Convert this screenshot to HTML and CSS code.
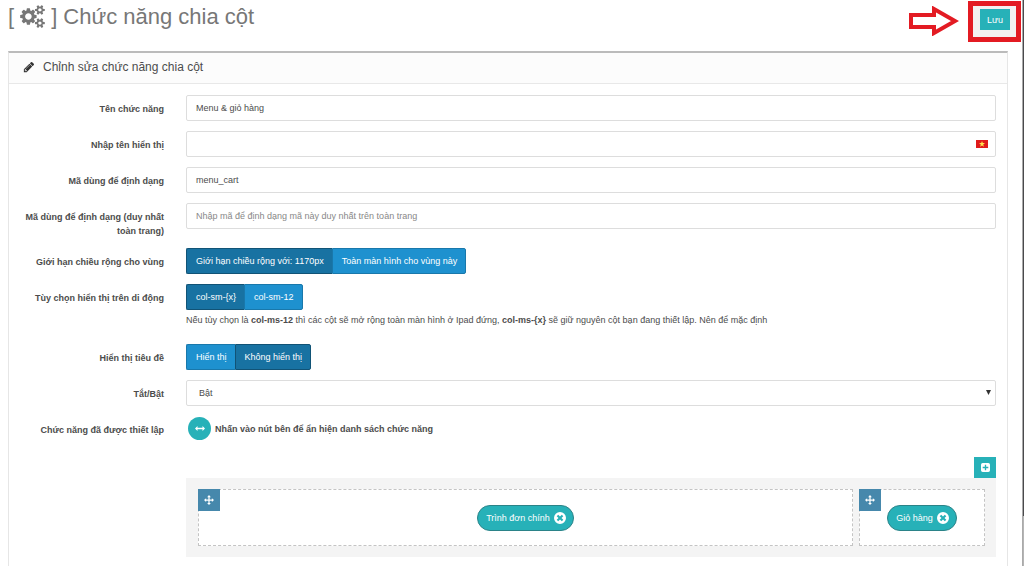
FILE: index.html
```html
<!DOCTYPE html>
<html lang="vi">
<head>
<meta charset="utf-8">
<meta name="viewport" content="width=device-width, initial-scale=1">
<title>Chức năng chia cột</title>
<link rel="stylesheet" href="styles.css">
</head>
<body>
<svg class="defs" aria-hidden="true">
  <symbol id="i-move" viewBox="0 0 16 16"><path d="M8 0l3 3.4H9v3.6h3.6V5L16 8l-3.4 3V9H9v3.6h2L8 16l-3-3.400h2V9H3.400v2L0 8l3.400-3v2H7V3.400H5z"/></symbol>
  <symbol id="i-close" viewBox="0 0 16 16"><path fill-rule="evenodd" d="M8 0a8 8 0 1 0 0 16A8 8 0 0 0 8 0zM5.600 3.600L8 6l2.400-2.400 2 2L10 8l2.400 2.400-2 2L8 10l-2.400 2.400-2-2L6 8 3.600 5.600z"/></symbol>
</svg>
<div class="page">
  <main class="content">
    <header class="top">
      <h1 class="title">[
        <svg class="cogs" viewBox="0 0 1920 1792" aria-hidden="true"><path d="M896 896q0-106-75-181t-181-75-181 75-75 181 75 181 181 75 181-75 75-181zm768 512q0-52-38-90t-90-38-90 38-38 90q0 53 37.500 90.500t90.500 37.500 90.500-37.500 37.500-90.500zm0-1024q0-52-38-90t-90-38-90 38-38 90q0 53 37.500 90.500t90.500 37.500 90.500-37.500 37.500-90.500zm-384 421v185q0 10-7 19.500t-16 10.500l-155 24q-11 35-32 76 34 48 90 115 7 11 7 20 0 12-7 19-23 30-82.500 89.500t-78.500 59.500q-11 0-21-7l-115-90q-37 19-77 31-11 108-23 155-7 24-30 24h-186q-11 0-20-7.500t-10-17.500l-23-153q-34-10-75-31l-118 89q-7 7-20 7-11 0-21-8-144-133-144-160 0-9 7-19 10-14 41-53t47-61q-23-44-35-82l-152-24q-10-1-17-9.500t-7-19.500v-185q0-10 7-19.500t16-10.500l155-24q11-35 32-76-34-48-90-115-7-11-7-20 0-12 7-20 22-30 82-89t79-59q11 0 21 7l115 90q34-18 77-32 11-108 23-154 7-24 30-24h186q11 0 20 7.500t10 17.500l23 153q34 10 75 31l118-89q8-7 20-7 11 0 21 8 144 133 144 160 0 8-7 19-12 16-42 54t-45 60q23 48 34 82l152 23q10 2 17 10.500t7 19.500zm640 533v140q0 16-149 31-12 27-30 52 51 113 51 138 0 4-4 7-122 71-124 71-8 0-46-47t-52-68q-20 2-30 2t-30-2q-14 21-52 68t-46 47q-2 0-124-71-4-3-4-7 0-25 51-138-18-25-30-52-149-15-149-31v-140q0-16 149-31 13-29 30-52-51-113-51-138 0-4 4-7 4-2 35-20t59-34 30-16q8 0 46 46.500t52 67.500q20-2 30-2t30 2q51-71 92-112l6-2q4 0 124 70 4 3 4 7 0 25-51 138 17 23 30 52 149 15 149 31zm0-1024v140q0 16-149 31-12 27-30 52 51 113 51 138 0 4-4 7-122 71-124 71-8 0-46-47t-52-68q-20 2-30 2t-30-2q-14 21-52 68t-46 47q-2 0-124-71-4-3-4-7 0-25 51-138-18-25-30-52-149-15-149-31v-140q0-16 149-31 13-29 30-52-51-113-51-138 0-4 4-7 4-2 35-20t59-34 30-16q8 0 46 46.500t52 67.500q20-2 30-2t30 2q51-71 92-112l6-2q4 0 124 70 4 3 4 7 0 25-51 138 17 23 30 52 149 15 149 31z"/></svg>
        ] Chức năng chia cột</h1>
      <div class="callout">
        <svg class="callout-arrow" viewBox="0 0 50 30" aria-hidden="true"><path d="M2 9h23V3l21 12-21 12v-6H2z"/></svg>
        <div class="callout-box"><button class="save" type="submit" form="settings">Lưu</button></div>
      </div>
    </header>
    <section class="panel">
      <h2 class="panel-head">
        <svg class="pencil" viewBox="0 0 1792 1792" aria-hidden="true"><path d="M491 1536l91-91-235-235-91 91v107h128v128h107zm523-928q0-22-22-22-10 0-17 7l-542 542q-7 7-7 17 0 22 22 22 10 0 17-7l542-542q7-7 7-17zm-54-192l416 416-832 832h-416v-416zm683 96q0 53-37 90l-166 166-416-416 166-165q36-38 90-38 53 0 91 38l235 234q37 39 37 91z"/></svg>
        Chỉnh sửa chức năng chia cột
      </h2>
      <form class="form" id="settings">
        <div class="row">
          <label class="label" for="name">Tên chức năng</label>
          <input class="control" id="name" type="text" value="Menu &amp; giỏ hàng">
        </div>
        <div class="row">
          <label class="label" for="display">Nhập tên hiển thị</label>
          <div class="field">
            <input class="control" id="display" type="text">
            <svg class="flag" viewBox="0 0 12 8" aria-hidden="true"><path fill="#e01b1b" d="M0 0h12v8H0z"/><path fill="#ffe34d" d="M6 1l.8 2.100H9L7.200 4.500l.7 2.200L6 5.400 4.100 6.700l.7-2.200L3 3.100h2.200z"/></svg>
          </div>
        </div>
        <div class="row">
          <label class="label" for="code">Mã dùng để định dạng</label>
          <input class="control" id="code" type="text" value="menu_cart">
        </div>
        <div class="row">
          <label class="label" for="unique">Mã dùng để định dạng (duy nhất toàn trang)</label>
          <input class="control" id="unique" type="text" placeholder="Nhập mã để định dạng mã này duy nhất trên toàn trang">
        </div>
        <div class="row" role="radiogroup" aria-labelledby="l-width">
          <span class="label" id="l-width">Giới hạn chiều rộng cho vùng</span>
          <div class="segments">
            <label class="segment"><input type="radio" name="width" checked>Giới hạn chiều rộng với: 1170px</label>
            <label class="segment"><input type="radio" name="width">Toàn màn hình cho vùng này</label>
          </div>
        </div>
        <div class="row" role="radiogroup" aria-labelledby="l-mobile">
          <span class="label" id="l-mobile">Tùy chọn hiển thị trên di động</span>
          <div>
            <div class="segments">
              <label class="segment"><input type="radio" name="mobile" checked>col-sm-{x}</label>
              <label class="segment"><input type="radio" name="mobile">col-sm-12</label>
            </div>
            <p class="help">Nếu tùy chọn là <b>col-ms-12</b> thì các cột sẽ mở rộng toàn màn hình ở Ipad đứng, <b>col-ms-{x}</b> sẽ giữ nguyên cột bạn đang thiết lập. Nên để mặc định</p>
          </div>
        </div>
        <div class="row" role="radiogroup" aria-labelledby="l-title">
          <span class="label" id="l-title">Hiển thị tiêu đề</span>
          <div class="segments">
            <label class="segment"><input type="radio" name="title">Hiển thị</label>
            <label class="segment"><input type="radio" name="title" checked>Không hiển thị</label>
          </div>
        </div>
        <div class="row">
          <label class="label" for="state">Tắt/Bật</label>
          <div class="field">
            <select class="control select" id="state"><option>Bật</option><option>Tắt</option></select>
            <svg class="caret" viewBox="0 0 6 6" aria-hidden="true"><path d="M0 0h6L3 6z"/></svg>
          </div>
        </div>
        <div class="row">
          <span class="label">Chức năng đã được thiết lập</span>
          <div>
            <div class="toggle-line">
              <button class="round" id="toggle" type="button" aria-label="Ẩn hiện danh sách"><svg viewBox="0 0 16 8" aria-hidden="true"><path d="M0 4l4-4v2.700h8V0l4 4-4 4V5.300H4V8z"/></svg></button>
              <label for="toggle">Nhấn vào nút bên để ẩn hiện danh sách chức năng</label>
            </div>
            <div class="builder-bar">
              <button class="add" type="button" aria-label="Thêm hàng"><svg viewBox="0 0 16 16" aria-hidden="true"><path fill-rule="evenodd" d="M3 0h10a3 3 0 0 1 3 3v10a3 3 0 0 1-3 3H3a3 3 0 0 1-3-3V3a3 3 0 0 1 3-3zM6.800 3v3.800H3v2.400h3.800V13h2.400V9.200H13V6.800H9.200V3z"/></svg></button>
            </div>
            <div class="builder">
              <div class="column">
                <button class="move" type="button" aria-label="Di chuyển"><svg aria-hidden="true"><use href="#i-move"/></svg></button>
                <div class="chip">Trình đơn chính<button class="remove" type="button" aria-label="Xóa"><svg aria-hidden="true"><use href="#i-close"/></svg></button></div>
              </div>
              <div class="column">
                <button class="move" type="button" aria-label="Di chuyển"><svg aria-hidden="true"><use href="#i-move"/></svg></button>
                <div class="chip">Giỏ hàng<button class="remove" type="button" aria-label="Xóa"><svg aria-hidden="true"><use href="#i-close"/></svg></button></div>
              </div>
            </div>
          </div>
        </div>
      </form>
    </section>
  </main>
  <div class="edge"></div>
</div>
</body>
</html>
```
FILE: styles.css
```css
* { box-sizing: border-box; }
body {
  margin: 0;
  background: #fff;
  color: #4c4c4c;
  font: 9px/14px "Liberation Sans", Arial, sans-serif;
}
button, input, select { font: inherit; color: inherit; }
button { border: 0; padding: 0; cursor: pointer; }
svg { display: block; fill: currentColor; }
.defs { position: absolute; width: 0; height: 0; }

.page { display: flex; min-height: 100vh; }
.content { flex: 1; min-width: 0; display: flex; flex-direction: column; padding-left: 8px; }
.edge {
  width: 2px;
  background: linear-gradient(#4a4a4c 91%, #b5b5b5 91%);
  border-left: 1px solid #aaa;
}

.top { display: flex; justify-content: space-between; align-items: flex-start; height: 51px; }
.title {
  display: flex;
  align-items: center;
  gap: 6px;
  margin: 4px 0 0;
  color: #777;
  font-size: 22px;
  font-weight: 400;
  line-height: 26px;
}
.cogs { width: 25px; height: 23px; margin-bottom: 2px; }
.callout { display: flex; align-items: flex-start; gap: 9px; padding: 1px 1px 0 0; }
.callout-arrow { width: 50px; height: 30px; margin-top: 5px; fill: none; stroke: #e31b23; stroke-width: 4; }
.callout-box { padding: 3px 6px 7px 7px; border: 5px solid #e31b23; background: #f3f1f1; }
.save { display: block; width: 30px; height: 21px; background: #27b1b8; color: #fff; }

.panel {
  flex: 1;
  margin-right: 14px;
  border: 1px solid #e6e6e6;
  border-top: 2px solid #bbb;
  border-bottom: 0;
}
.panel-head {
  display: flex;
  align-items: center;
  gap: 8px;
  height: 31px;
  margin: 0;
  padding: 0 0 2px 14px;
  border-bottom: 1px solid #e8e8e8;
  background: #fcfcfc;
  font-size: 12px;
  font-weight: 400;
}
.pencil { width: 12px; height: 12px; color: #333; }

.form { display: grid; gap: 10px; padding: 11px 11px 10px 13px; }
.row { display: grid; grid-template-columns: 142px minmax(0, 1fr); column-gap: 22px; align-items: start; }
.label { padding-top: 7px; text-align: right; font-weight: 700; }
.field { position: relative; }
.control {
  display: block;
  width: 100%;
  height: 26px;
  padding: 0 9px;
  border: 1px solid #ddd;
  border-radius: 2px;
  background: #fff;
}
.control::placeholder { color: #888; opacity: 1; }
.select { appearance: none; padding-left: 12px; }
.flag { position: absolute; top: 9px; right: 8px; width: 12px; height: 8px; }
.caret { position: absolute; top: 10px; right: 5px; width: 5px; height: 5px; color: #333; }

.segments { display: flex; }
.segment {
  position: relative;
  height: 26px;
  padding: 0 8px 0 9px;
  border: 1px solid #1978ab;
  background: #1e91cf;
  color: #fff;
  line-height: 24px;
  cursor: pointer;
}
.segment:first-child { border-radius: 2px 0 0 2px; border-right: 0; }
.segment:last-child { border-radius: 0 2px 2px 0; }
.segment:has(:checked) { background: #1872a2; border-color: #115376; }
.segment input { position: absolute; opacity: 0; pointer-events: none; }
.help { margin: 3px 0 7px; }

.toggle-line { display: flex; align-items: center; gap: 4px; padding: 1px 0 0 2px; font-weight: 700; }
.round, .add, .move { display: grid; place-items: center; color: #fff; }
.round { width: 23px; height: 23px; border-radius: 50%; background: #27b1b8; }
.round svg { width: 10px; height: 5px; }
.builder-bar { display: flex; justify-content: flex-end; margin-top: 17px; }
.add { width: 22px; height: 21px; background: #27b1b8; }
.add svg { width: 9px; height: 9px; }
.builder {
  display: grid;
  grid-template-columns: 655fr 126fr;
  gap: 6px;
  padding: 11px 11px 11px 12px;
  background: #f4f4f4;
}
.column {
  position: relative;
  display: grid;
  place-items: center;
  height: 57px;
  border: 1px dashed #c4c4c4;
  background: #fff;
}
.move { position: absolute; top: -1px; left: -1px; width: 22px; height: 22px; background: #4688ac; }
.move svg { width: 10px; height: 10px; }
.chip {
  display: flex;
  align-items: center;
  gap: 4px;
  height: 26px;
  padding: 0 7px 0 8px;
  border: 1px solid #2b8388;
  border-radius: 13px;
  background: #27b1b8;
  color: #fff;
}
.remove { background: none; color: #fff; }
.remove svg { width: 12px; height: 12px; }
```
